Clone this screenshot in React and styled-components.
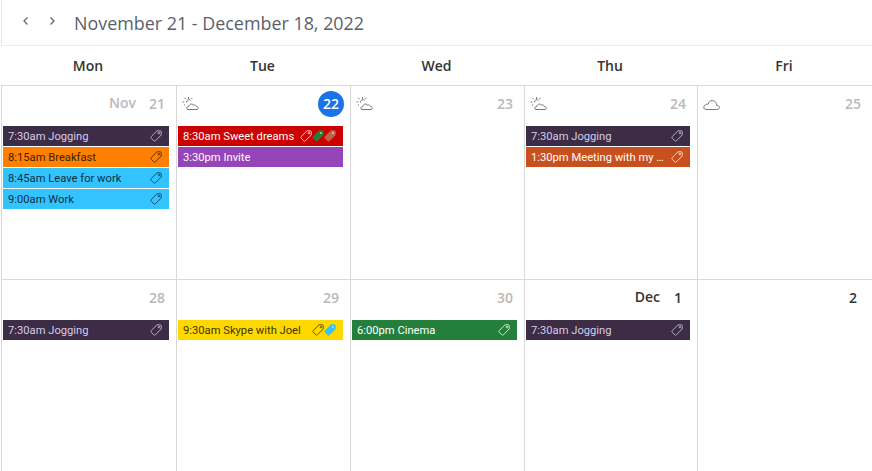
import styled, { createGlobalStyle } from "styled-components";

const GlobalStyle = createGlobalStyle`
  html, body {
    margin: 0;
    padding: 0;
    background: #fff;
    font-family: "Open Sans", "Noto Sans", sans-serif;
    overflow: hidden;
  }
`;

const Scheduler = styled.div`
  width: 872px;
  height: 471px;
  display: flex;
  flex-direction: column;
  overflow: hidden;
`;

const Toolbar = styled.div`
  flex: none;
  height: 45px;
  margin-left: 1px;
  border-left: 1px solid #e6e6e6;
  border-bottom: 1px solid #ececec;
  display: flex;
  align-items: center;
`;

const NavButton = styled.button`
  width: 26px;
  height: 26px;
  padding: 0;
  border: 0;
  background: none;
  color: #666;
  display: flex;
  align-items: center;
  justify-content: center;
`;

const NavGroup = styled.div`
  display: flex;
  margin-left: 11px;
  margin-top: -3px;
`;

const Title = styled.div`
  margin-left: 9px;
  font-size: 17.9px;
  color: #5b5f6b;
`;

const Row = styled.div`
  flex: none;
  display: grid;
  grid-template-columns: 175px 174px 174px 173px 1fr;
  margin-left: 1px;
`;

const HeaderCell = styled.div`
  height: 39px;
  padding-right: 1px;
  display: flex;
  align-items: center;
  justify-content: center;
  font-size: 14px;
  font-weight: 600;
  color: #333;
`;

const DayCell = styled.div`
  height: ${(p) => p.$height}px;
  border-left: 1px solid #d9d9d9;
  border-top: 1px solid #d9d9d9;
  padding: 0 7px 0 1px;
  min-width: 0;
`;

const DayHead = styled.div`
  height: 35px;
  padding: 5px 0 0 4px;
  display: flex;
  align-items: flex-start;
`;

const Weather = styled.svg`
  width: 17px;
  height: 15px;
  margin-top: 5px;
  color: #777;
  flex: none;
`;

const Month = styled.span`
  margin-left: auto;
  margin-right: ${(p) => p.$gap}px;
  font-size: 14px;
  font-weight: 600;
  line-height: 24px;
  color: ${(p) => (p.$muted ? "#b9b9b9" : "#333")};
`;

const DayNumber = styled.span`
  width: 26px;
  height: 24px;
  padding-bottom: 2px;
  margin-left: ${(p) => (p.$push ? "auto" : "0")};
  margin-right: -1px;
  border-radius: 50%;
  display: flex;
  align-items: center;
  justify-content: center;
  font-size: 14px;
  font-weight: 600;
  background: ${(p) => (p.$today ? "#1a73e8" : "transparent")};
  color: ${(p) => (p.$today ? "#fff" : p.$muted ? "#b9b9b9" : "#333")};
`;

const Events = styled.div`
  display: flex;
  flex-direction: column;
  gap: 1px;
`;

const Event = styled.div`
  height: 20px;
  padding: 0 7px 0 5px;
  display: flex;
  align-items: center;
  gap: 5px;
  font-family: "Roboto", sans-serif;
  font-size: 11.2px;
  background: ${(p) => p.$bg};
  color: ${(p) => p.$fg};
`;

const EventText = styled.span`
  flex: 1;
  min-width: 0;
  white-space: nowrap;
  overflow: hidden;
  text-overflow: ellipsis;
`;

const Tags = styled.span`
  display: flex;
  flex: none;
`;

const TagIcon = styled.svg`
  width: 12px;
  height: 12px;
  display: block;
  opacity: ${(p) => (p.$solid ? 1 : 0.8)};
`;

const Tag = ({ fill }) => (
  <TagIcon $solid={!!fill} viewBox="0 0 12 12" fill={fill || "none"} stroke={fill || "currentColor"} strokeWidth="1">
    <path d="M7 .8h3.200c.6 0 1 .4 1 1V5L5.400 10.800c-.5.5-1.100.5-1.600 0L1.200 8.200c-.5-.5-.5-1.100 0-1.600z" />
    <circle cx="8.900" cy="3.100" r=".8" fill={fill ? "#fff" : "none"} stroke={fill ? "none" : "currentColor"} />
  </TagIcon>
);

const SunCloud = () => (
  <Weather viewBox="0 0 17 15" fill="none" stroke="currentColor" strokeWidth="1">
    <path d="M4.500 6.500a2.600 2.600 0 0 1 4.300-2.200M6.500 1v2M2.300 1.800l1.300 1.300M10.500 1.800 9.300 3M.5 6h1.800M1.900 9.500l1.200-1" />
    <path d="M5.500 13.500H15c1 0 1.500-.8 1.300-1.700-.2-.8-1-1.300-1.800-1.100-.4-1.500-1.600-2-2.700-1.500-.8-1.300-3-1.700-4.300-.2-.5.500-.7 1-.7 1.500-1 0-2 .6-2 1.600 0 .8.500 1.400 1.500 1.400z" />
  </Weather>
);

const Cloud = () => (
  <Weather viewBox="0 0 17 15" fill="none" stroke="currentColor" strokeWidth="1">
    <path d="M3 13.500h10.800c1.700 0 2.700-.9 2.600-2.100-.1-1.200-1.200-2-2.500-1.800C13.500 6.500 11.700 4.500 9.300 4.500 7.200 4.500 5.700 6 5.100 8.200 3 7.800 1 9.300.8 11.200c-.1 1.400.8 2.300 2.200 2.300z" />
  </Weather>
);

const JOG = { bg: "#3c2c46", fg: "#d6cbe6", time: "7:30am Jogging" };

const HEADERS = ["Mon", "Tue", "Wed", "Thu", "Fri"];

const ROWS = [
  {
    height: 193,
    days: [
      {
        num: 21, month: "Nov", gap: 8, muted: true,
        events: [
          JOG,
          { bg: "#ff8000", fg: "#402000", time: "8:15am Breakfast" },
          { bg: "#33c3ff", fg: "#0d3140", time: "8:45am Leave for work" },
          { bg: "#33c3ff", fg: "#0d3140", time: "9:00am Work" },
        ],
      },
      {
        num: 22, today: true, weather: "sun",
        events: [
          { bg: "#cc0000", fg: "#fff", time: "8:30am Sweet dreams", tags: [null, "#237f3b", "#b9654b"] },
          { bg: "#9545b8", fg: "#fff", time: "3:30pm Invite", noTag: true },
        ],
      },
      { num: 23, muted: true, weather: "sun", events: [] },
      {
        num: 24, muted: true, weather: "sun",
        events: [JOG, { bg: "#c84f1e", fg: "#fff", time: "1:30pm Meeting with my colleagues" }],
      },
      { num: 25, muted: true, weather: "cloud", events: [] },
    ],
  },
  {
    height: 192,
    days: [
      { num: 28, muted: true, events: [JOG] },
      {
        num: 29, muted: true,
        events: [{ bg: "#ffd800", fg: "#403600", time: "9:30am Skype with Joel", tags: [null, "#33c3ff"] }],
      },
      { num: 30, muted: true, events: [{ bg: "#237f3b", fg: "#fff", time: "6:00pm Cinema" }] },
      { num: 1, month: "Dec", gap: 5, events: [JOG] },
      { num: 2, events: [] },
    ],
  },
];

const App = () => {
  return (
    <Scheduler>
      <GlobalStyle />
      <Toolbar>
        <NavGroup>
          <NavButton aria-label="Previous">
            <svg width="10" height="10" viewBox="0 0 10 10" fill="none" stroke="currentColor" strokeWidth="1.3">
              <path d="M6.500 1.500 3 5l3.500 3.500" />
            </svg>
          </NavButton>
          <NavButton aria-label="Next">
            <svg width="10" height="10" viewBox="0 0 10 10" fill="none" stroke="currentColor" strokeWidth="1.3">
              <path d="M3.500 1.500 7 5 3.500 8.500" />
            </svg>
          </NavButton>
        </NavGroup>
        <Title>November 21 - December 18, 2022</Title>
      </Toolbar>
      <Row>
        {HEADERS.map((h) => (
          <HeaderCell key={h}>{h}</HeaderCell>
        ))}
      </Row>
      {ROWS.map((row) => (
        <Row key={row.days[0].num}>
          {row.days.map((day) => (
            <DayCell key={day.num} $height={row.height}>
              <DayHead>
                {day.weather === "sun" && <SunCloud />}
                {day.weather === "cloud" && <Cloud />}
                {day.month && (
                  <Month $muted={day.muted} $gap={day.gap}>
                    {day.month}
                  </Month>
                )}
                <DayNumber $push={!day.month} $today={day.today} $muted={day.muted}>
                  {day.num}
                </DayNumber>
              </DayHead>
              <Events>
                {day.events.map((ev) => (
                  <Event key={ev.time} $bg={ev.bg} $fg={ev.fg}>
                    <EventText>{ev.time}</EventText>
                    {!ev.noTag && (
                      <Tags>
                        {(ev.tags || [null]).map((fill, i) => (
                          <Tag key={i} fill={fill} />
                        ))}
                      </Tags>
                    )}
                  </Event>
                ))}
              </Events>
            </DayCell>
          ))}
        </Row>
      ))}
    </Scheduler>
  );
};

export default App;
